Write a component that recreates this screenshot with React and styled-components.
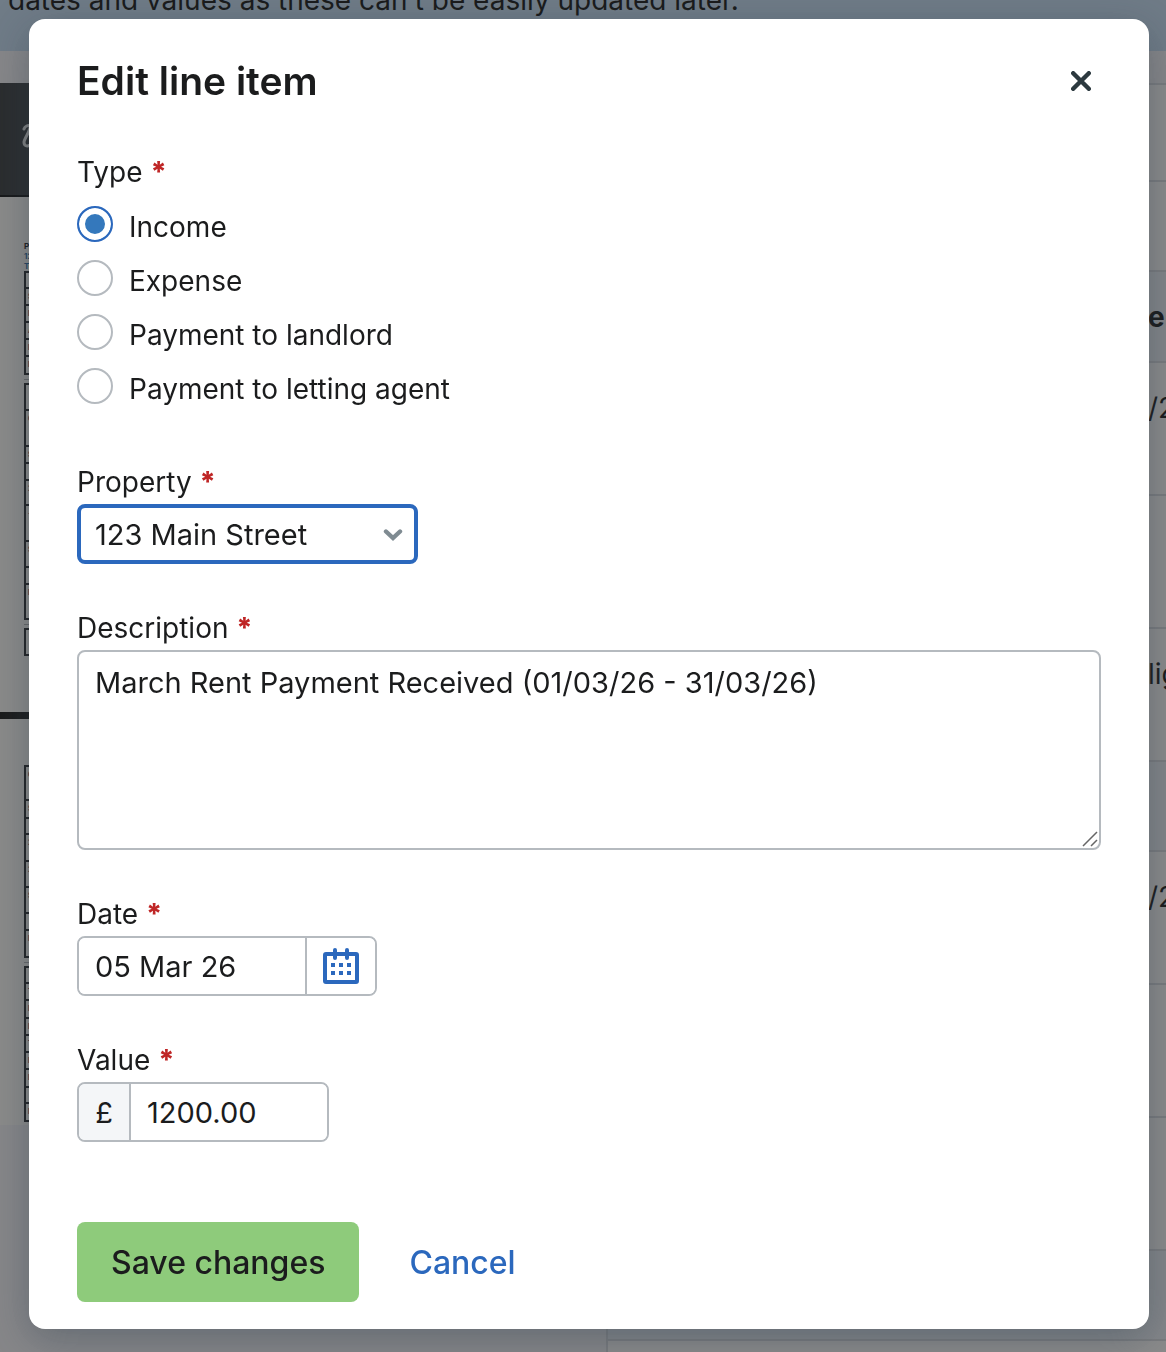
import React, { useState } from 'react';
import styled, { createGlobalStyle } from 'styled-components';

const GlobalStyle = createGlobalStyle`
  *, *::before, *::after {
    box-sizing: border-box;
  }

  body {
    margin: 0;
    background: #8a8b8d;
    color: #1b1c1d;
    font-family: Inter, "Liberation Sans", sans-serif;
    font-size: 28px;
  }

  button, input, select, textarea {
    margin: 0;
    font: inherit;
    color: inherit;
  }
`;

/* ---------- page behind the dialog ---------- */

const Page = styled.div`
  position: fixed;
  inset: 0;
  overflow: hidden;
  background: #f4f4f8;
`;

const Banner = styled.div`
  margin-top: -48px;
  padding: 26px 8px 29px;
  background: #c6def4;
  line-height: 44px;
  white-space: nowrap;
`;

const Columns = styled.div`
  display: grid;
  grid-template-columns: 52fr 48fr;
  margin-top: 32px;
`;

const Preview = styled.div`
  overflow: hidden;
`;

const PreviewHeader = styled.div`
  display: flex;
  align-items: center;
  height: 114px;
  padding: 0 22px 6px;
  background: #3c4044;
  border-bottom: 2px solid #16181a;
`;

const Sheet = styled.div`
  height: ${({ $height }) => $height}px;
  padding: ${({ $top }) => $top}px 24px 0;
  overflow: hidden;
  background: #fcfdfb;
  border-bottom: ${({ $divider }) => ($divider ? '7px solid #1c1e1e' : '0')};
`;

const SheetText = styled.div`
  font-size: 8px;
  line-height: 10px;
  font-weight: 700;
  color: ${({ $link }) => ($link ? '#2f6fa8' : '#1b1c1d')};
`;

const SheetTable = styled.div`
  border: solid #2a2c30;
  border-width: 2px 2px 0;
`;

const SheetRule = styled.div`
  height: 1px;
  margin: 4px 0 3px;
  background: #b4b6b8;
`;

const SheetRow = styled.div`
  height: ${({ $height }) => $height}px;
  padding: 3px 2px;
  border-bottom: 2px solid #2a2c30;
  overflow: hidden;
  font-size: 7px;
  line-height: 9px;
  font-weight: 700;
  color: #4a3f66;
`;

const Items = styled.table`
  width: 100%;
  table-layout: fixed;
  border-collapse: collapse;
  border-left: 2px solid #dadde2;
  background: #fcfcfc;
  text-align: left;

  th, td {
    width: 18px;
    padding: 0;
    border-top: 2px solid #dadde2;
    overflow: hidden;
    vertical-align: top;
    line-height: 44px;
    white-space: nowrap;
  }

  th:first-child, td:first-child {
    width: auto;
  }
`;

const ItemRow = styled.tr`
  height: ${({ $height }) => $height}px;
  background: ${({ $shaded }) => ($shaded ? '#edf2f8' : 'transparent')};

  && > * {
    padding-top: 23px;
  }
`;

/* ---------- dialog ---------- */

const Overlay = styled.div`
  position: relative;
  min-height: 100vh;
  padding: 19px 17px 23px 29px;
  background: rgba(26, 26, 26, 0.5);
`;

const Dialog = styled.form`
  padding: 37px 48px 27px;
  border-radius: 16px;
  background: #fff;
  box-shadow: 0 10px 40px rgba(44, 62, 80, 0.4);
`;

const DialogHeader = styled.header`
  display: flex;
  align-items: center;
  justify-content: space-between;
  margin-bottom: 44px;
`;

const Title = styled.h2`
  margin: 0;
  font-size: 39px;
  line-height: 50px;
  font-weight: 600;
`;

const CloseButton = styled.button`
  display: flex;
  padding: 10px;
  border: 0;
  background: none;
  cursor: pointer;
`;

const Field = styled.div`
  margin-bottom: ${({ $last }) => ($last ? 80 : 42)}px;
`;

const Group = styled.fieldset`
  margin: 0 0 42px;
  padding: 0 0 14px;
  border: 0;
`;

const Label = styled.label`
  display: block;
  width: fit-content;
  padding: 0;
  line-height: 44px;
`;

const Star = styled.span`
  color: #bf2626;
  font-weight: 800;
`;

const Options = styled.div`
  display: grid;
  gap: 18px;
  padding-top: 12px;
`;

const Option = styled.label`
  display: flex;
  gap: 16px;
  width: fit-content;
  height: 36px;
  line-height: 42px;
`;

const Radio = styled.input`
  appearance: none;
  width: 36px;
  height: 36px;
  border: 2px solid #b5babf;
  border-radius: 50%;
  background: #fff;

  &:checked {
    border-color: #2b68bd;
    background: #3478bc;
    box-shadow: inset 0 0 0 6px #fff;
  }
`;

const SelectWrap = styled.div`
  display: grid;
  align-items: center;
  width: 341px;

  > * {
    grid-area: 1 / 1;
  }

  svg {
    justify-self: end;
    margin: 1px 15px 0 0;
    pointer-events: none;
  }
`;

const Select = styled.select`
  appearance: none;
  width: 100%;
  height: 60px;
  padding: 0 48px 0 14px;
  border: 4px solid #2b68bd;
  border-radius: 8px;
  outline: 0;
  background: #fff;
  font-size: 29px;
`;

const TextAreaWrap = styled.div`
  position: relative;

  svg {
    position: absolute;
    right: 2px;
    bottom: 2px;
    pointer-events: none;
  }
`;

const TextArea = styled.textarea`
  display: block;
  width: 100%;
  height: 200px;
  padding: 9px 16px;
  border: 2px solid #b5babf;
  border-radius: 8px;
  outline: 0;
  font-size: 29px;
  line-height: 44px;
  resize: none;
`;

const InputGroup = styled.div`
  display: flex;
  width: ${({ $width }) => $width}px;
  height: 60px;
  border: 2px solid #b5babf;
  border-radius: 8px;
  overflow: hidden;
  font-size: 29px;
`;

const Input = styled.input`
  flex: 1;
  min-width: 0;
  padding: 0 16px;
  border: 0;
  outline: 0;
  background: #fff;
`;

const Prefix = styled.span`
  display: flex;
  align-items: center;
  justify-content: center;
  width: 52px;
  border-right: 2px solid #b5babf;
  background: #f4f6f8;
`;

const CalendarButton = styled.button`
  display: flex;
  align-items: center;
  justify-content: center;
  width: 70px;
  padding: 0;
  border: 0;
  border-left: 2px solid #b5babf;
  background: #fff;
  cursor: pointer;
`;

const Actions = styled.div`
  display: flex;
  gap: 16px;
`;

const Button = styled.button`
  height: 80px;
  padding: 0 34px;
  border: 0;
  border-radius: 8px;
  background: ${({ $primary }) => ($primary ? '#8ecb7b' : 'none')};
  color: ${({ $primary }) => ($primary ? '#1b1c1d' : '#2b68bd')};
  font-size: 32px;
  font-weight: 500;
  cursor: pointer;
`;

const types = ['Income', 'Expense', 'Payment to landlord', 'Payment to letting agent'];

// each sheet is a list of tables, each row is [height, text]
const firstSheet = [
  [[16, ''], [17, 'S'], [17, 'D'], [17, 'A'], [17, 'P'], [18, 'R']],
  [[26, ''], [36, 'G'], [17, 'S'], [17, ''], [25, '2'], [36, '-'], [26, 'S B'], [17, ''], [35, 'B T S']],
  [[26, '']],
];

const secondSheet = [
  [[34, 'G'], [18, 'S'], [16, ''], [27, '2'], [26, '2'], [26, 'S B'], [17, ''], [27, 'B B']],
  [[16, ''], [17, 'T'], [18, 'E'], [17, 'E'], [17, 'T'], [17, 'E'], [18, 'B'], [16, ''], [18, 'B']],
];

const items = [
  { height: 97 },
  { height: 90 },
  { height: 91, shaded: true, text: 'er' },
  { height: 133, text: '/26' },
  { height: 133 },
  { height: 133, text: 'lig' },
  { height: 90, shaded: true },
  { height: 133, text: '/26' },
  { height: 133 },
  { height: 133 },
  { height: 90, shaded: true },
  { height: 133 },
];

const Required = () => <Star aria-hidden="true">*</Star>;

const SheetTables = ({ tables }) =>
  tables.map((rows, index) => (
    <React.Fragment key={index}>
      <SheetTable>
        {rows.map(([height, text], row) => (
          <SheetRow key={row} $height={height}>{text}</SheetRow>
        ))}
      </SheetTable>
      {index < tables.length - 1 && <SheetRule />}
    </React.Fragment>
  ));

const Background = () => (
  <Page aria-hidden="true">
    <Banner>dates and values as these can’t be easily updated later.</Banner>
    <Columns>
      <Preview>
        <PreviewHeader>
          <svg width="24" height="24" viewBox="0 0 24 24" fill="none" stroke="#e8e8e8" strokeWidth="3" strokeLinecap="round">
            <path d="M2 5C3 2 6 1 8 2C9 6 3 13 2 18C2 22 5 23 8 21C12 18 14 10 15 4" />
          </svg>
        </PreviewHeader>
        <Sheet $height={522} $top={44} $divider>
          <SheetText>Property</SheetText>
          <SheetText $link>123 Main Street</SheetText>
          <SheetText $link>Tenancy</SheetText>
          <SheetTables tables={firstSheet} />
        </Sheet>
        <Sheet $height={406} $top={46}>
          <SheetTables tables={secondSheet} />
        </Sheet>
      </Preview>
      <Items>
        <tbody>
          {items.map(({ height, shaded, text }, index) => {
            const Cell = shaded ? 'th' : 'td';
            return (
              <ItemRow key={index} $height={height} $shaded={shaded}>
                <Cell />
                <Cell>{text}</Cell>
              </ItemRow>
            );
          })}
        </tbody>
      </Items>
    </Columns>
  </Page>
);

const App = () => {
  const [type, setType] = useState('Income');
  const [description, setDescription] = useState('March Rent Payment Received (01/03/26 - 31/03/26)');
  const [date, setDate] = useState('05 Mar 26');
  const [value, setValue] = useState('1200.00');

  return (
    <>
      <GlobalStyle />
      <Background />
      <Overlay>
        <Dialog role="dialog" aria-modal="true" aria-labelledby="dialog-title" onSubmit={(e) => e.preventDefault()}>
          <DialogHeader>
            <Title id="dialog-title">Edit line item</Title>
            <CloseButton type="button" aria-label="Close">
              <svg width="20" height="20" viewBox="0 0 20 20" fill="none" stroke="#2c393f" strokeWidth="4.4" strokeLinecap="round">
                <path d="M2.2 2.2L17.8 17.8M17.8 2.2L2.2 17.8" />
              </svg>
            </CloseButton>
          </DialogHeader>

          <Group>
            <Label as="legend">Type <Required /></Label>
            <Options>
              {types.map((name) => (
                <Option key={name}>
                  <Radio
                    type="radio"
                    name="type"
                    value={name}
                    checked={type === name}
                    onChange={() => setType(name)}
                  />
                  {name}
                </Option>
              ))}
            </Options>
          </Group>

          <Field>
            <Label htmlFor="property">Property <Required /></Label>
            <SelectWrap>
              <Select id="property">
                <option>123 Main Street</option>
              </Select>
              <svg width="20" height="14" viewBox="0 0 20 14" fill="none" stroke="#7f8b92" strokeWidth="4.4" strokeLinecap="round">
                <path d="M3 3.5L10 10L17 3.5" />
              </svg>
            </SelectWrap>
          </Field>

          <Field>
            <Label htmlFor="description">Description <Required /></Label>
            <TextAreaWrap>
              <TextArea id="description" value={description} onChange={(e) => setDescription(e.target.value)} />
              <svg width="18" height="18" viewBox="0 0 18 18" fill="none" stroke="#666" strokeWidth="1.5">
                <path d="M2 16L16 2M10 16L16 10" />
              </svg>
            </TextAreaWrap>
          </Field>

          <Field>
            <Label htmlFor="date">Date <Required /></Label>
            <InputGroup $width={300}>
              <Input id="date" value={date} onChange={(e) => setDate(e.target.value)} />
              <CalendarButton type="button" aria-label="Choose date">
                <svg width="36" height="36" viewBox="0 0 36 36" fill="#2b68bd">
                  <path fillRule="evenodd" d="M3 4H33Q36 4 36 7V33Q36 36 33 36H3Q0 36 0 33V7Q0 4 3 4ZM4 8V32H32V8Z" />
                  <path d="M8 15h4v4H8zM16 15h4v4h-4zM24 15h4v4h-4zM8 23h4v4H8zM16 23h4v4h-4zM24 23h4v4h-4z" />
                  <path d="M12 2V10M24 2V10" stroke="#2b68bd" strokeWidth="4" strokeLinecap="round" />
                </svg>
              </CalendarButton>
            </InputGroup>
          </Field>

          <Field $last>
            <Label htmlFor="value">Value <Required /></Label>
            <InputGroup $width={252}>
              <Prefix>£</Prefix>
              <Input id="value" inputMode="decimal" value={value} onChange={(e) => setValue(e.target.value)} />
            </InputGroup>
          </Field>

          <Actions>
            <Button type="submit" $primary>Save changes</Button>
            <Button type="button">Cancel</Button>
          </Actions>
        </Dialog>
      </Overlay>
    </>
  );
};

export default App;
